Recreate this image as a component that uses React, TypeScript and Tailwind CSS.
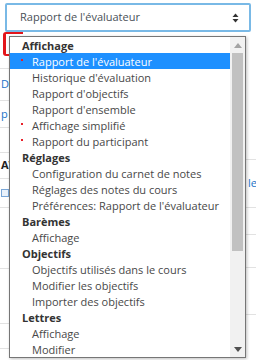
import React from "react";

type Row = { label: string; kind: "group" | "item"; mark?: boolean; active?: boolean };

const ROWS: Row[] = [
    { label: "Affichage", kind: "group" },
    { label: "Rapport de l'évaluateur", kind: "item", mark: true, active: true },
    { label: "Historique d'évaluation", kind: "item" },
    { label: "Rapport d'objectifs", kind: "item" },
    { label: "Rapport d'ensemble", kind: "item" },
    { label: "Affichage simplifié", kind: "item", mark: true },
    { label: "Rapport du participant", kind: "item", mark: true },
    { label: "Réglages", kind: "group" },
    { label: "Configuration du carnet de notes", kind: "item" },
    { label: "Réglages des notes du cours", kind: "item" },
    { label: "Préférences: Rapport de l'évaluateur", kind: "item" },
    { label: "Barèmes", kind: "group" },
    { label: "Affichage", kind: "item" },
    { label: "Objectifs", kind: "group" },
    { label: "Objectifs utilisés dans le cours", kind: "item" },
    { label: "Modifier les objectifs", kind: "item" },
    { label: "Importer des objectifs", kind: "item" },
    { label: "Lettres", kind: "group" },
    { label: "Affichage", kind: "item" },
    { label: "Modifier", kind: "item" },
];

function OptionRow({ row }: { row: Row }) {
    if (row.kind === "group") {
        return (
            <div className="h-[16px] flex items-center pl-[12px] font-bold text-[#333] leading-none">
                {row.label}
            </div>
        );
    }
    return (
        <div
            className={
                row.active
                    ? "relative h-[16px] flex items-center pl-[22px] bg-[#1e90ff] text-white leading-none whitespace-nowrap"
                    : "relative h-[16px] flex items-center pl-[22px] text-[#484848] leading-none whitespace-nowrap"
            }
        >
            {row.mark && <span className="absolute left-[11px] top-[6px] w-[2px] h-[2px] bg-[#e8202a]" />}
            {row.label}
        </div>
    );
}

export default function App() {
    return (
        <div className="relative w-[256px] h-[360px] overflow-hidden bg-white text-[11px] font-['Open_Sans',sans-serif]">
            {/* select */}
            <div className="pt-[3px] px-[5px]">
                <div className="h-[29px] flex items-center justify-between rounded-[2px] border-2 border-[#79b9e6] bg-white pl-[13px] pr-[10px] text-[#495057]">
                    <span>Rapport de l'évaluateur</span>
                    <svg width="7" height="10" viewBox="0 0 7 10">
                        <path d="M3.5 0.5 L6.5 4 L0.5 4 Z" fill="#333" />
                        <path d="M3.5 9.5 L6.5 6 L0.5 6 Z" fill="#333" />
                    </svg>
                </div>
            </div>

            {/* page behind the open list */}
            <div className="flex justify-between">
                <div className="w-[9px] shrink-0 flex flex-col">
                    <div className="ml-[3px] h-[24px] w-[20px] min-w-[20px] shrink-0 border-y-2 border-l-[3px] border-[#e3151b] rounded-l-[3px]" />
                    <div className="h-[13px] border-b border-[#e2e2e2]" />
                    <div className="h-[32px] border-b border-[#e2e2e2] flex items-center text-[#1a73c8] pl-[1px]">D</div>
                    <div className="h-[27px] border-b border-[#e2e2e2] flex items-center text-[#1a73c8] pl-[1px]">p</div>
                    <div className="h-[25px] border-b border-[#e2e2e2]" />
                    <div className="h-[26px] border-b border-[#e2e2e2] flex items-center font-bold text-[#222] pl-[1px]">AV</div>
                    <div className="h-[29px] border-b border-[#e2e2e2] flex items-center pl-[1px]">
                        <span className="block w-[8px] h-[8px] border border-[#7aa7d8] bg-[#eaf2fb]" />
                    </div>
                    <div className="h-[61px] border-b border-[#e2e2e2]" />
                    <div className="h-[55px] border-b border-[#e2e2e2]" />
                    <div className="h-[25px] border-b border-[#e2e2e2]" />
                </div>
                <div className="w-[10px] flex flex-col pt-[2px] overflow-hidden">
                    <div className="h-[126px] border-b border-[#e2e2e2]" />
                    <div className="h-[48px] border-b border-[#e2e2e2] flex items-center pl-[2px] text-[#1a73c8]">lev</div>
                    <div className="h-[27px] border-b border-[#e2e2e2]" />
                    <div className="h-[33px] border-b border-[#e2e2e2]" />
                    <div className="h-[47px] border-b border-[#e2e2e2]" />
                </div>
            </div>

            {/* open option list */}
            <div className="absolute left-[9px] top-[36px] w-[237px] h-[322px] flex border border-[#767676] bg-white shadow-[1px_1px_3px_rgba(0,0,0,0.25)]">
                <div className="flex-1 flex flex-col overflow-hidden">
                    {ROWS.map((row, i) => (
                        <OptionRow key={i} row={row} />
                    ))}
                </div>
                <div className="w-[15px] flex flex-col bg-[#f1f1f1]">
                    <div className="h-[16px] flex items-center justify-center">
                        <svg width="8" height="5" viewBox="0 0 8 5">
                            <path d="M4 0 L8 5 L0 5 Z" fill="#a3a3a3" />
                        </svg>
                    </div>
                    <div className="h-[198px] mx-[2px] bg-[#c1c1c1]" />
                    <div className="flex-1" />
                    <div className="h-[16px] flex items-center justify-center">
                        <svg width="8" height="5" viewBox="0 0 8 5">
                            <path d="M0 0 L8 0 L4 5 Z" fill="#505050" />
                        </svg>
                    </div>
                </div>
            </div>
        </div>
    );
}
